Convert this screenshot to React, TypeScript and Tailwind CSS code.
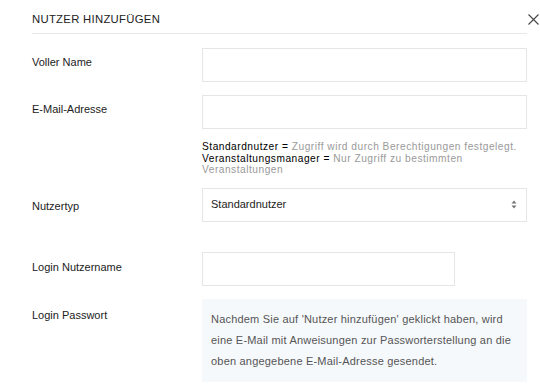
import React from "react";

const font = { fontFamily: '"Liberation Sans", Arial, sans-serif' };

const Label: React.FC<{ text: string; pt: string }> = ({ text, pt }) => (
  <div className={`${pt} text-[11px] leading-[13px] text-[#222]`}>{text}</div>
);

const App: React.FC = () => {
  return (
    <div className="min-h-screen bg-white" style={font}>
      <div className="pl-[32px] pr-[13px]">
        {/* HEADER */}
        <div className="relative pt-[13px] pb-[7px] border-b border-[#e8e8e8]">
          <h1 className="text-[11.3px] leading-[13px] text-[#222] tracking-[0.3px]">
            NUTZER HINZUFÜGEN
          </h1>
          <button className="absolute right-[-12px] top-[14px] w-[11px] h-[11px] text-[#444]">
            <svg viewBox="0 0 11 11" width="11" height="11">
              <path d="M0.5 0.5 L10.5 10.5 M10.5 0.5 L0.5 10.5" stroke="currentColor" strokeWidth="1.1" fill="none" />
            </svg>
          </button>
        </div>

        {/* FORM */}
        <div className="grid grid-cols-[170px_1fr]">
          <div className="mt-[14px]">
            <Label text="Voller Name" pt="pt-[8px]" />
          </div>
          <input className="mt-[14px] h-[34px] w-full border border-[#e6e6e6] outline-none" />

          <div className="mt-[13px]">
            <Label text="E-Mail-Adresse" pt="pt-[8px]" />
          </div>
          <input className="mt-[13px] h-[34px] w-full border border-[#e6e6e6] outline-none" />

          <div />
          <div className="mt-[12px] text-[10.2px] leading-[11.7px] tracking-[0.5px] text-[#9a9a9a]">
            <div>
              <span className="text-[#000]">Standardnutzer =</span> Zugriff wird durch Berechtigungen festgelegt.
            </div>
            <div>
              <span className="text-[#000]">Veranstaltungsmanager =</span> Nur Zugriff zu bestimmten
            </div>
            <div>Veranstaltungen</div>
          </div>

          <div className="mt-[11.5px]">
            <Label text="Nutzertyp" pt="pt-[12px]" />
          </div>
          <div className="mt-[11.5px] h-[34px] flex items-center justify-between border border-[#e6e6e6] pl-[8px] pr-[9px]">
            <span className="text-[11px] text-[#222]">Standardnutzer</span>
            <svg width="6" height="9" viewBox="0 0 6 9">
              <path d="M3 0.5 L5.5 3.5 L0.5 3.5 Z M3 8.5 L5.5 5.5 L0.5 5.5 Z" fill="#777" />
            </svg>
          </div>

          <div className="mt-[30px]">
            <Label text="Login Nutzername" pt="pt-[9px]" />
          </div>
          <div className="mt-[30px]">
            <input className="h-[34px] w-[253px] border border-[#e6e6e6] outline-none" />
          </div>

          <div className="mt-[13px]">
            <Label text="Login Passwort" pt="pt-[10px]" />
          </div>
          <div className="mt-[13px] h-[83px] bg-[#f5f9fc] pl-[9px] pr-[10px] py-[10px] text-[11px] leading-[21px] tracking-[0.2px] text-[#555]">
            Nachdem Sie auf 'Nutzer hinzufügen' geklickt haben, wird eine E-Mail mit Anweisungen zur
            Passworterstellung an die oben angegebene E-Mail-Adresse gesendet.
          </div>
        </div>
      </div>
    </div>
  );
};

export default App;
